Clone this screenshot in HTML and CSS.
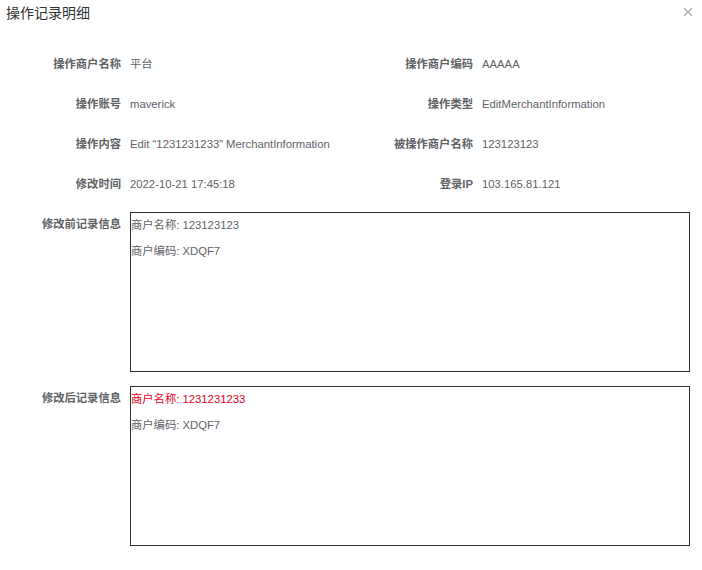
FILE: index.html
```html
<!DOCTYPE html>
<html lang="zh">
<head>
<meta charset="utf-8">
<title>操作记录明细</title>
<link rel="stylesheet" href="styles.css">
</head>
<body>
<div class="dialog">
  <div class="header">
    <span class="title">操作记录明细</span>
    <span class="close">
      <svg width="10" height="10" viewBox="0 0 10 10"><path d="M1 1L9 9M9 1L1 9" stroke="#a0a3aa" stroke-width="1.1" fill="none"/></svg>
    </span>
  </div>
  <div class="form">
    <div class="grid">
      <div class="item"><span class="label">操作商户名称</span><span class="value">平台</span></div>
      <div class="item"><span class="label">操作商户编码</span><span class="value">AAAAA</span></div>
      <div class="item"><span class="label">操作账号</span><span class="value">maverick</span></div>
      <div class="item"><span class="label">操作类型</span><span class="value">EditMerchantInformation</span></div>
      <div class="item"><span class="label">操作内容</span><span class="value">Edit “1231231233” MerchantInformation</span></div>
      <div class="item"><span class="label">被操作商户名称</span><span class="value">123123123</span></div>
      <div class="item"><span class="label">修改时间</span><span class="value">2022-10-21 17:45:18</span></div>
      <div class="item"><span class="label">登录IP</span><span class="value">103.165.81.121</span></div>
    </div>
    <div class="record first">
      <span class="label">修改前记录信息</span>
      <div class="box">
        <div class="line">商户名称: 123123123</div>
        <div class="line">商户编码: XDQF7</div>
      </div>
    </div>
    <div class="record">
      <span class="label">修改后记录信息</span>
      <div class="box">
        <div class="line changed">商户名称: 1231231233</div>
        <div class="line">商户编码: XDQF7</div>
      </div>
    </div>
  </div>
</div>
</body>
</html>
```
FILE: styles.css
```css
* { box-sizing: border-box; }
html, body { margin: 0; padding: 0; background: #fff; }
body {
  font-family: "Liberation Sans", Arial, "Noto Sans CJK SC", sans-serif;
  color: #606266;
  font-size: 11.3px;
}
.dialog { width: 702px; height: 570px; }
.header {
  display: flex;
  justify-content: space-between;
  align-items: center;
  padding: 5px 9px 5px 6px;
  height: 26px;
}
.title {
  font-size: 14px;
  line-height: 16px;
  color: #303133;
}
.close {
  display: flex;
  width: 10px;
  height: 10px;
  margin-top: -2px;
}
.form { padding: 18px 0 0 10px; }
.grid {
  display: grid;
  grid-template-columns: 352px 1fr;
}
.item {
  display: flex;
  height: 40px;
  line-height: 40px;
}
.label {
  width: 120px;
  flex: none;
  text-align: right;
  padding-right: 9px;
  font-weight: bold;
  color: #606266;
}
.value { color: #606266; }
.record {
  display: flex;
  margin-top: 14px;
}
.record.first { margin-top: 8px; }
.record .label { line-height: 25px; }
.box {
  width: 560px;
  height: 160px;
  border: 1px solid #333;
}
.line {
  line-height: 26px;
  color: #606266;
}
.line:first-child { line-height: 25px; }
.line.changed { color: #e4001b; }
```
